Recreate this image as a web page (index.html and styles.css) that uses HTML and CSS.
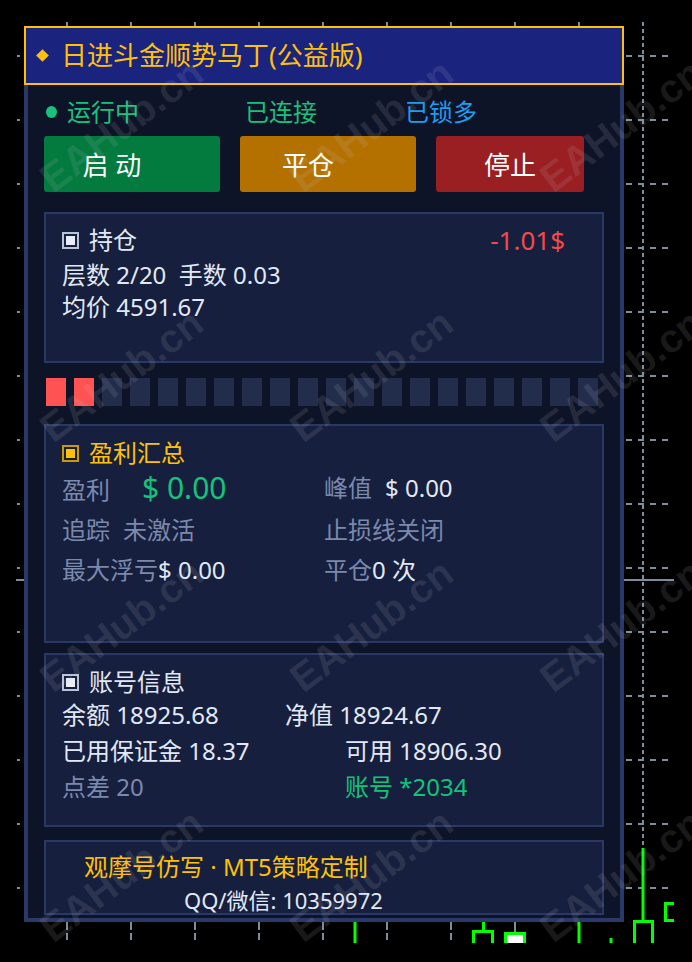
FILE: index.html
```html
<!DOCTYPE html>
<html lang="zh-CN">
<head>
  <meta charset="UTF-8" />
  <meta name="viewport" content="width=device-width, initial-scale=1.0"/>
  <title>日进斗金顺势马丁(公益版)</title>
  <link rel="stylesheet" href="styles.css">
</head>
<body>
  <!-- chart behind the panel -->
  <svg class="chart" width="692" height="962" viewBox="0 0 692 962">
    <g stroke="#7f8c9c" stroke-width="2" fill="none">
      <path d="M67 22V26M131 22V26M195 22V26M259 22V26M323 22V26M387 22V26M451 22V26M515 22V26M579 22V26"/>
      <path d="M643 22V848" stroke-dasharray="4 3"/>
      <path d="M626 56H668M626 120H668M626 184H668M626 248H668M626 312H668M626 376H668M626 440H668M626 504H668M626 568H668M626 632H668M626 696H668M626 760H668M626 824H668M626 888H668" stroke-dasharray="6 6"/>
      <path d="M17 56H20M17 120H20M17 184H20M17 248H20M17 312H20M17 376H20M17 440H20M17 504H20M17 568H20M17 632H20M17 696H20M17 760H20M17 824H20M17 888H20"/>
      <path d="M16 580H674"/>
      <path d="M67 922V940M131 922V940M195 922V940M259 922V940M323 922V940M387 922V940M451 922V940" stroke-dasharray="8 3"/>
      <path d="M515 922V933"/>
    </g>
    <g stroke="#00ff00" stroke-width="3" fill="none">
      <path d="M355 922V943"/>
      <path d="M483.5 922V931.5M473.5 943V931.5H492.5V943"/>
      <path d="M505.5 943V933.5H524.5V943" fill="#ffffff"/>
      <path d="M579 922V943"/>
      <path d="M611 938V943"/>
      <path d="M643 848V921.5M634.5 943V921.5H652.5V943"/>
      <path d="M674 903.5H665.5V920.5H674"/>
    </g>
  </svg>

  <div class="panel">
    <div class="title-bar">
      <span class="diamond"></span>
      <span class="title">日进斗金顺势马丁(公益版)</span>
    </div>

    <div class="panel-body">
      <div class="status-row">
        <span class="status run"><span class="dot"></span>运行中</span>
        <span class="status link">已连接</span>
        <span class="status lock">已锁多</span>
      </div>

      <div class="buttons">
        <button class="btn btn-start">启 动</button>
        <button class="btn btn-close">平仓</button>
        <button class="btn btn-stop">停止</button>
      </div>

      <!-- 持仓 -->
      <div class="card card-pos">
        <div class="card-head">
          <span class="box-icon"></span>持仓
          <span class="pnl-neg">-1.01$</span>
        </div>
        <p class="line">层数 2/20&nbsp;&nbsp;手数 0.03</p>
        <p class="line">均价 4591.67</p>
      </div>

      <div class="layers">
        <span class="layer on"></span><span class="layer on"></span>
        <span class="layer"></span><span class="layer"></span><span class="layer"></span><span class="layer"></span>
        <span class="layer"></span><span class="layer"></span><span class="layer"></span><span class="layer"></span>
        <span class="layer"></span><span class="layer"></span><span class="layer"></span><span class="layer"></span>
        <span class="layer"></span><span class="layer"></span><span class="layer"></span><span class="layer"></span>
        <span class="layer"></span><span class="layer"></span>
      </div>

      <!-- 盈利汇总 -->
      <div class="card card-profit">
        <div class="card-head gold"><span class="box-icon"></span>盈利汇总</div>
        <div class="row">
          <div><span class="lbl w-profit">盈利</span><span class="big-green">$ 0.00</span></div>
          <div><span class="lbl gap">峰值</span><span class="val">$ 0.00</span></div>
        </div>
        <div class="row">
          <div><span class="lbl w-trail">追踪</span><span class="lbl">未激活</span></div>
          <div><span class="lbl">止损线关闭</span></div>
        </div>
        <div class="row">
          <div><span class="lbl">最大浮亏</span><span class="val">$ 0.00</span></div>
          <div><span class="lbl">平仓</span><span class="val">0 次</span></div>
        </div>
      </div>

      <!-- 账号信息 -->
      <div class="card card-account">
        <div class="card-head"><span class="box-icon"></span>账号信息</div>
        <div class="row row-a">
          <div>余额 18925.68</div>
          <div>净值 18924.67</div>
        </div>
        <div class="row row-b">
          <div>已用保证金 18.37</div>
          <div>可用 18906.30</div>
        </div>
        <div class="row row-b">
          <div class="lbl">点差 20</div>
          <div class="green">账号 *2034</div>
        </div>
      </div>

      <div class="card card-footer">
        <p class="promo">观摩号仿写 · MT5策略定制</p>
        <p class="contact">QQ/微信: 10359972</p>
      </div>
    </div>
  </div>

  <div class="watermark">
    <span>EAHub.cn</span><span>EAHub.cn</span><span>EAHub.cn</span>
    <span>EAHub.cn</span><span>EAHub.cn</span><span>EAHub.cn</span>
    <span>EAHub.cn</span><span>EAHub.cn</span><span>EAHub.cn</span>
    <span>EAHub.cn</span><span>EAHub.cn</span><span>EAHub.cn</span>
  </div>
</body>
</html>
```

FILE: styles.css
```css
body {
  margin: 0;
  width: 692px;
  height: 962px;
  overflow: hidden;
  position: relative;
  background: #000;
  color: #e2e9f6;
  font-family: "Noto Sans", "Noto Sans CJK SC", sans-serif;
}

.chart {
  position: absolute;
  left: 0;
  top: 0;
}

.panel {
  position: relative;
  width: 600px;
  margin: 26px 0 0 24px;
}

.title-bar {
  height: 59px;
  box-sizing: border-box;
  border: 2px solid #ffc107;
  background: #1a237e;
  display: flex;
  align-items: center;
  padding-left: 12px;
  color: #ffc107;
  font-size: 26px;
}

.diamond {
  width: 9px;
  height: 9px;
  background: #ffc107;
  transform: rotate(45deg);
  margin-right: 14px;
}

.title {
  line-height: 55px;
}

.panel-body {
  background: #0e1428;
  border: 4px solid #2b3969;
  border-top: 0;
  padding: 15px 16px 3px;
}

.status-row {
  display: flex;
  height: 24px;
  line-height: 24px;
  margin-left: 2px;
  font-size: 24px;
}

.status {
  display: flex;
  align-items: center;
}

.run {
  width: 199px;
  color: #18c27c;
}

.link {
  width: 160px;
  color: #18c27c;
}

.lock {
  color: #1f9cf0;
}

.dot {
  width: 11px;
  height: 12px;
  border-radius: 50%;
  background: #18c27c;
  margin-right: 10px;
}

.buttons {
  display: flex;
  gap: 20px;
  margin-top: 12px;
}

.btn {
  height: 56px;
  border: 0;
  border-radius: 3px;
  padding: 0;
  color: #fff;
  font-family: inherit;
  font-size: 26px;
  text-align: center;
}

.btn-start {
  width: 176px;
  padding-right: 40px;
  background: #037a3e;
}

.btn-close {
  width: 176px;
  padding-right: 40px;
  background: #b47100;
}

.btn-stop {
  width: 148px;
  background: #991f22;
}

.card {
  box-sizing: border-box;
  border: 2px solid #2a3866;
  background: #161f3e;
  padding: 0 16px;
  font-size: 24px;
}

.card p {
  margin: 0;
}

.card-head {
  display: flex;
  align-items: center;
}

.box-icon {
  width: 17px;
  height: 17px;
  box-sizing: border-box;
  border: 2px solid #b9c3d8;
  padding: 2px;
  margin-right: 10px;
}

.box-icon::after {
  content: "";
  display: block;
  width: 9px;
  height: 9px;
  background: #e8edf6;
}

.gold {
  color: #ffc107;
}

.gold .box-icon {
  border-color: #c99a08;
}

.gold .box-icon::after {
  background: #ffc107;
}

.card-pos {
  height: 151px;
  margin-top: 20px;
  padding-top: 10px;
}

.card-pos .card-head {
  line-height: 32px;
  margin-bottom: 3px;
}

.card-pos .line {
  line-height: 32px;
}

.pnl-neg {
  margin-left: auto;
  margin-right: 21px;
  color: #f24a4a;
  font-size: 26px;
}

.layers {
  display: flex;
  gap: 8px;
  height: 28px;
  margin: 15px 0 0 2px;
}

.layer {
  width: 20px;
  background: #222d4c;
}

.layer.on {
  background: #ff5252;
}

.card-profit {
  height: 219px;
  margin-top: 18px;
  padding-top: 12px;
}

.card-profit .card-head,
.card-account .card-head {
  line-height: 30px;
}

.row {
  display: grid;
  grid-template-columns: 262px 1fr;
}

.card-profit .row {
  line-height: 40px;
}

.lbl {
  color: #7b89ad;
}

.val {
  color: #e2e9f6;
}

.gap {
  margin-right: 13px;
}

.w-profit {
  display: inline-block;
  width: 80px;
}

.w-trail {
  display: inline-block;
  width: 61px;
}

.big-green {
  color: #12c47a;
  font-size: 30px;
}

.card-account {
  height: 174px;
  margin-top: 10px;
  padding-top: 12px;
}

.card-account .row {
  line-height: 36px;
}

.card-account .row-a {
  grid-template-columns: 223px 1fr;
}

.card-account .row-b {
  grid-template-columns: 283px 1fr;
}

.green {
  color: #12c47a;
}

.card-footer {
  height: 75px;
  margin-top: 13px;
  padding-top: 10px;
}

.card-footer .promo {
  line-height: 30px;
  margin-left: 22px;
  color: #ffc107;
}

.card-footer .contact {
  line-height: 24px;
  font-size: 22px;
  margin: 6px 0 0 122px;
}

.watermark {
  position: absolute;
  left: -3px;
  top: 0;
  display: grid;
  grid-template-columns: repeat(3, 250px);
  grid-auto-rows: 250px;
  place-items: center;
  pointer-events: none;
}

.watermark span {
  transform: rotate(-37deg);
  font: bold 40px "Liberation Sans", sans-serif;
  color: rgba(200, 200, 210, 0.13);
  white-space: nowrap;
}
```
